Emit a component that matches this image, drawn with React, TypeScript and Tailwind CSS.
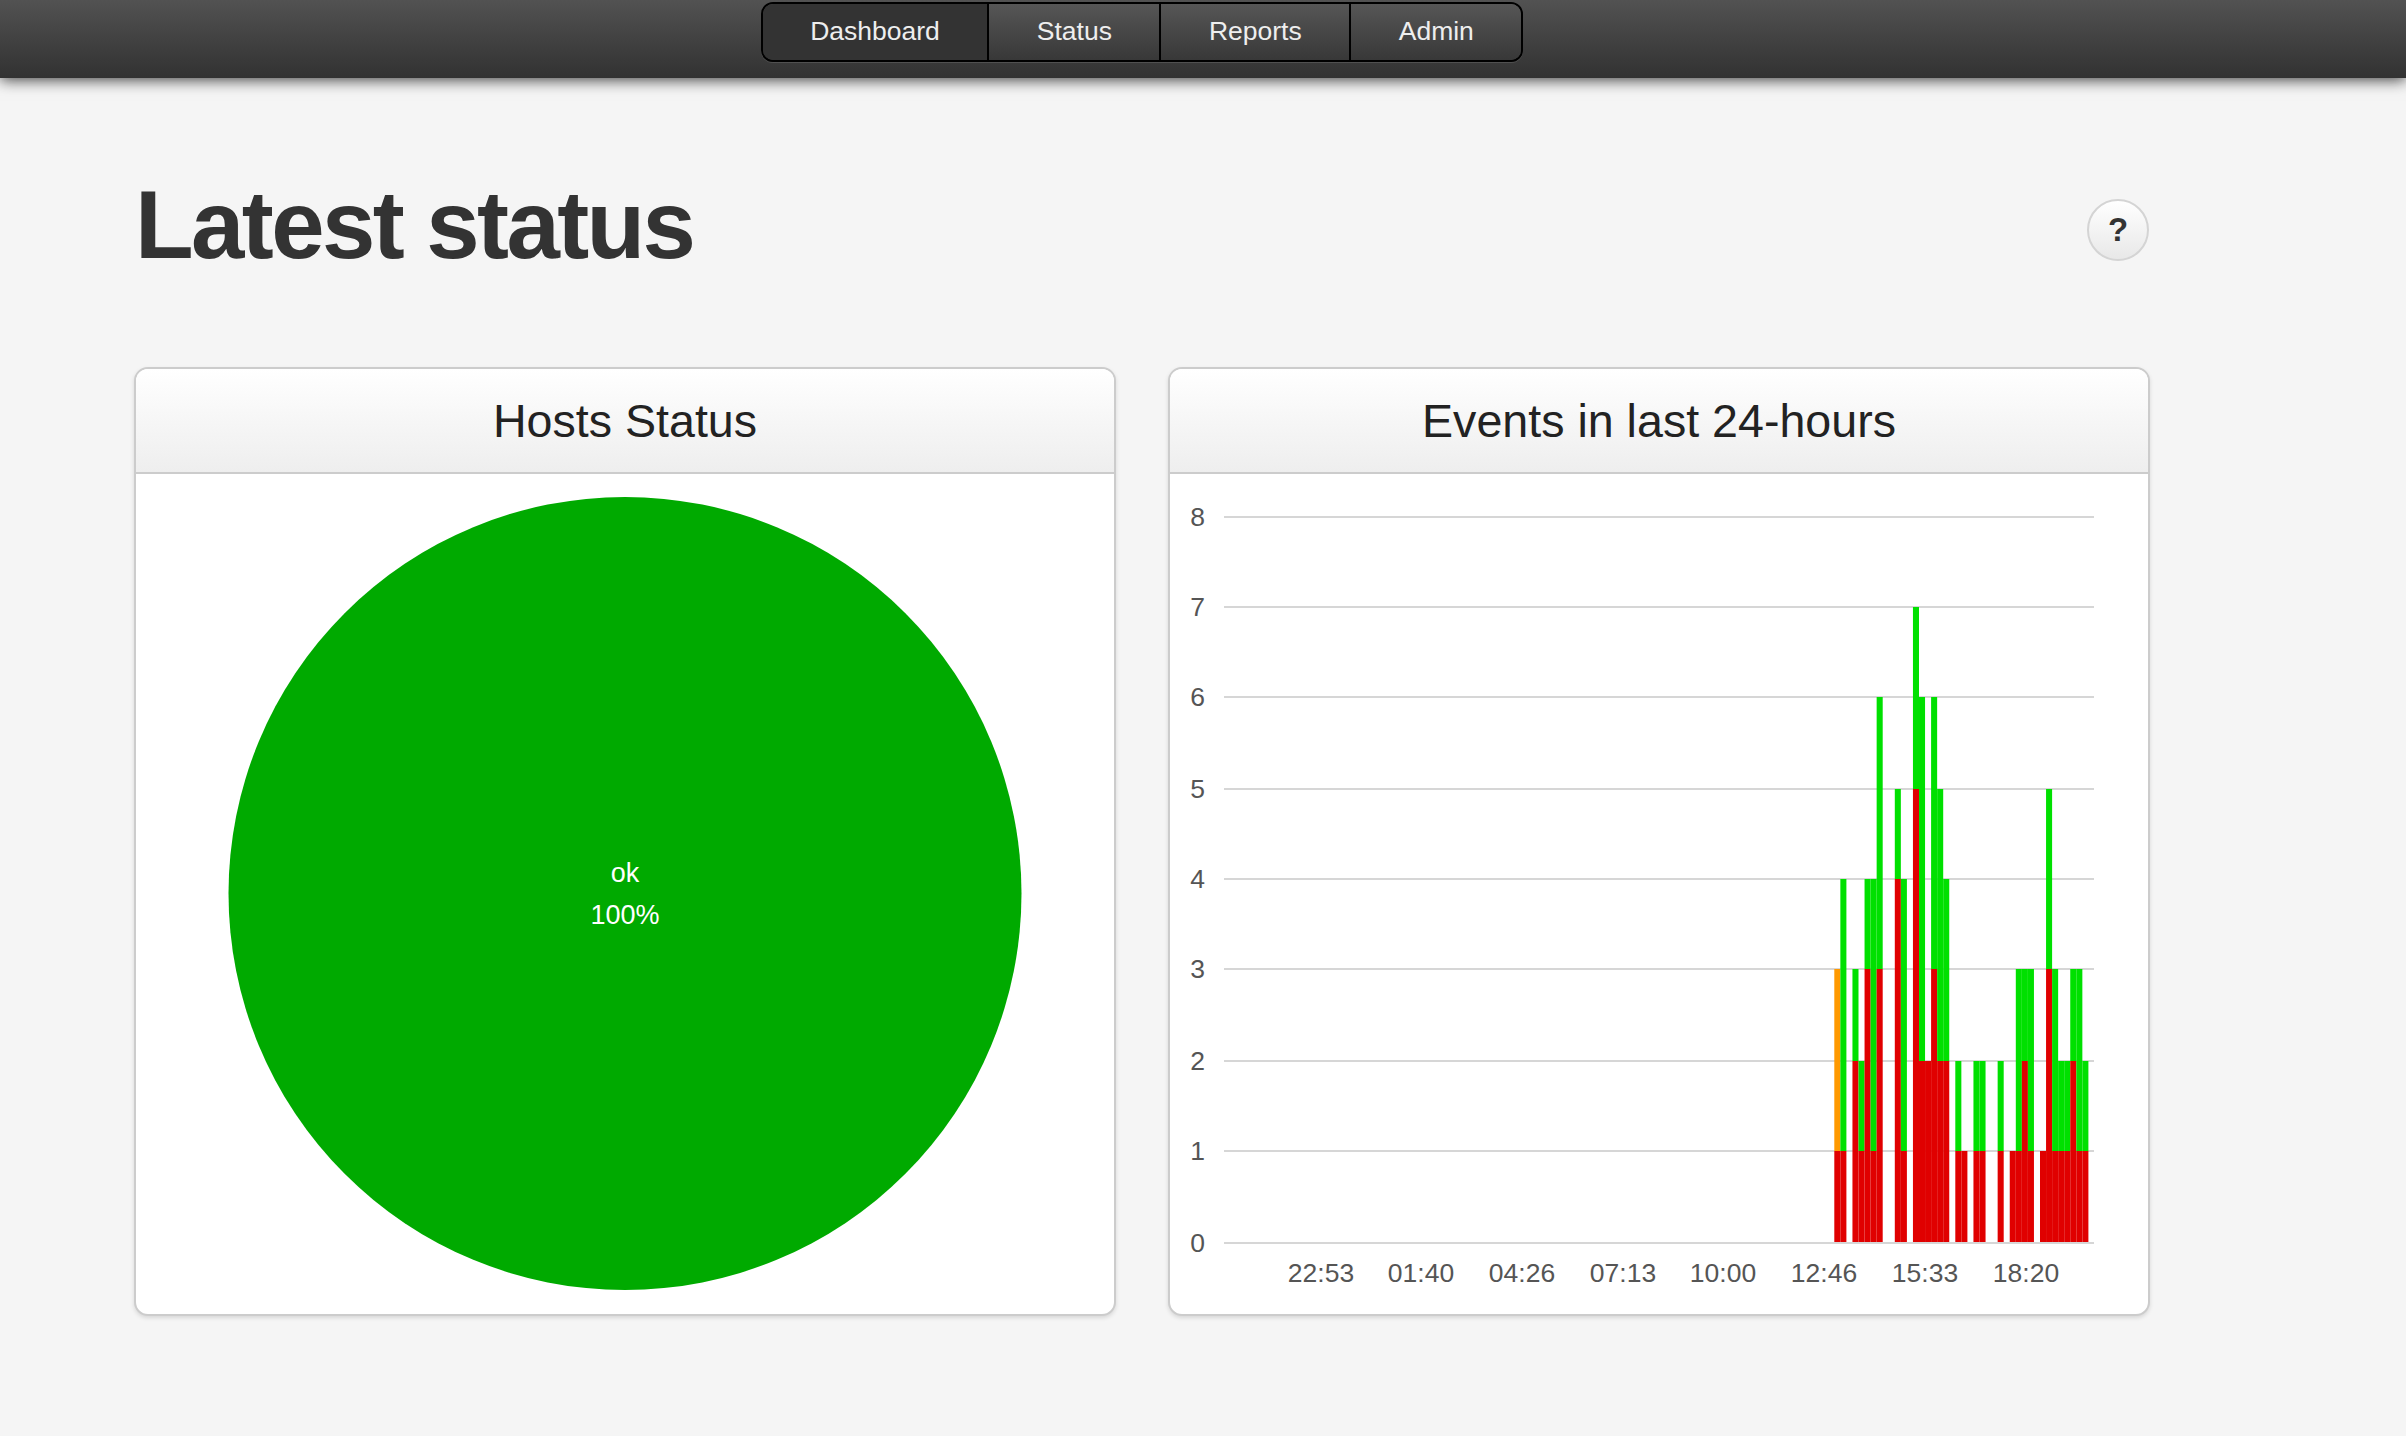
import React from "react";

const navItems = ["Dashboard", "Status", "Reports", "Admin"];

// pixel height of every y axis tick, 0 to 8
const ticks = [1243, 1151, 1061, 969, 879, 789, 697, 607, 517];
const timeLabels = [
  ["22:53", 1321],
  ["01:40", 1421],
  ["04:26", 1522],
  ["07:13", 1623],
  ["10:00", 1723],
  ["12:46", 1824],
  ["15:33", 1925],
  ["18:20", 2026],
] as const;

// [red, other] stack tops per 20 minute slot, null where nothing happened
const bars: ([number, number] | null)[] = [
  [1, 3], [1, 4], null, [2, 3], [1, 2], [3, 4], [1, 4], [3, 6], null, null,
  [4, 5], [1, 4], null, [5, 7], [2, 6], [2, 2], [3, 6], [2, 5], [2, 4], null,
  [1, 2], [1, 1], null, [1, 2], [1, 2], null, null, [1, 2], null, [1, 1],
  [1, 3], [2, 3], [1, 3], null, [1, 1], [3, 5], [1, 3], [1, 2], [1, 2], [2, 3],
  [1, 3], [1, 2],
];

const BAR_X = 1834.3;
const BAR_W = 6.05;

const EventsChart = () => (
  <svg viewBox="1170 474 978 840" className="block w-full h-[840px]">
    {ticks.map((y, i) => (
      <g key={i}>
        <rect x={1224} y={y - 1} width={870} height={2} fill="#d6d6d6" />
        <text x={1197.5} y={y + 9} textAnchor="middle" fontSize={26.5} fill="#555555">
          {i}
        </text>
      </g>
    ))}
    {bars.map((bar, i) => {
      if (!bar) return null;
      const x = BAR_X + i * BAR_W;
      const [red, top] = bar;
      return (
        <g key={i}>
          {top > red && (
            <rect
              x={x}
              y={ticks[top]}
              width={BAR_W}
              height={ticks[red] - ticks[top]}
              fill={i === 0 ? "#ff9900" : "#00e000"}
            />
          )}
          <rect x={x} y={ticks[red]} width={BAR_W} height={1242 - ticks[red]} fill="#e00000" />
        </g>
      );
    })}
    {timeLabels.map(([label, x]) => (
      <text key={label} x={x} y={1281.5} textAnchor="middle" fontSize={26.5} fill="#555555">
        {label}
      </text>
    ))}
  </svg>
);

const HostsPie = () => (
  <svg viewBox="0 0 978 840" className="block w-full h-[840px]">
    <circle cx={489} cy={419.5} r={396.5} fill="#00aa00" />
    <text x={489} y={408} textAnchor="middle" fontSize={27} fill="#ffffff">
      ok
    </text>
    <text x={489} y={450} textAnchor="middle" fontSize={27} fill="#ffffff">
      100%
    </text>
  </svg>
);

const Card = ({ title, children }: { title: string; children: React.ReactNode }) => (
  <section className="w-[982px] h-[949px] rounded-[14px] border-2 border-[#cccccc] bg-white overflow-hidden shadow-[0_2px_4px_rgba(0,0,0,0.12)]">
    <h2 className="h-[105px] border-b-2 border-[#cccccc] bg-gradient-to-b from-white to-[#eeeeee] text-center text-[46.6px] leading-[104px] text-[#222222]">
      {title}
    </h2>
    {children}
  </section>
);

export default function App() {
  return (
    <div className="min-h-[1436px] bg-[#f5f5f5] font-['Liberation_Sans',Helvetica,sans-serif]">
      <header className="h-[78px] bg-gradient-to-b from-[#525252] to-[#323232] shadow-[0_2px_14px_rgba(0,0,0,0.75)] pl-[134px]">
        <div className="w-[2016px] flex justify-center pt-[2px]">
          <nav className="flex h-[60px] rounded-[12px] border-2 border-black overflow-hidden shadow-[0_1px_0_rgba(255,255,255,0.12)]">
            {navItems.map((item, i) => (
              <a
                key={item}
                className={`px-[47.5px] text-[26.5px] leading-[55px] text-[#eeeeee] ${
                  i === 0
                    ? "bg-[#333333]"
                    : "border-l-2 border-black bg-gradient-to-b from-[#565656] to-[#383838]"
                }`}
              >
                {item}
              </a>
            ))}
          </nav>
        </div>
      </header>

      <main className="w-[2016px] ml-[134px]">
        <div className="flex justify-between items-start pt-[94px] pb-[89px]">
          <h1 className="ml-[1px] text-[96px] leading-[106px] font-bold tracking-[-2.6px] text-[#333333]">
            Latest status
          </h1>
          <button className="mt-[27px] mr-[1px] w-[62px] h-[62px] rounded-full border-2 border-[#d4d4d4] bg-gradient-to-b from-white to-[#e8e8e8] text-[33px] font-bold text-[#333333]">
            ?
          </button>
        </div>

        <div className="flex gap-[52px]">
          <Card title="Hosts Status">
            <HostsPie />
          </Card>
          <Card title="Events in last 24-hours">
            <EventsChart />
          </Card>
        </div>
      </main>
    </div>
  );
}
